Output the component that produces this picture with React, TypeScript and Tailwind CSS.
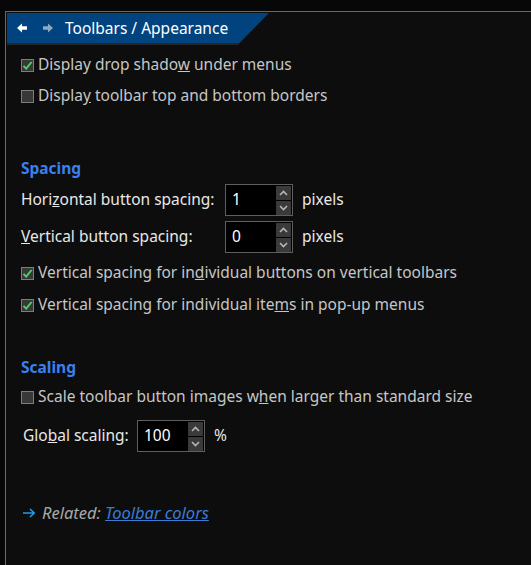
import React from 'react';

const font = { fontFamily: '"Noto Sans", "Open Sans", sans-serif' };

const CheckBox: React.FC<{ checked?: boolean }> = ({ checked }) => (
  <span className="w-[13px] h-[13px] border border-[#7c7c7c] bg-[#383838] flex items-center justify-center shrink-0">
    {checked && (
      <svg width="11" height="11" viewBox="0 0 11 11">
        <path d="M1.5 5.8 L4.2 8.6 L9.6 2" fill="none" stroke="#4fd36b" strokeWidth="1.9" />
      </svg>
    )}
  </span>
);

const CheckRow: React.FC<{ checked?: boolean; mt: string; children: React.ReactNode }> = ({ checked, mt, children }) => (
  <div className={`flex items-center gap-[4px] h-6 pl-[14px] ${mt}`}>
    <CheckBox checked={checked} />
    <span className="text-[#c6c6c6] text-[15.5px]">{children}</span>
  </div>
);

const Spin: React.FC<{ value: string }> = ({ value }) => (
  <div className="w-[68px] h-[32px] border border-[#5e5e5e] bg-black flex items-stretch">
    <span className="flex-1 flex items-center pl-[6px] text-white text-[15.5px]">{value}</span>
    <div className="flex flex-col justify-center gap-px pr-px">
      <span className="w-[15px] h-[14px] bg-[#3a3a3a] flex items-center justify-center">
        <svg width="9" height="6" viewBox="0 0 9 6"><path d="M1 5 L4.5 1.5 L8 5" fill="none" stroke="#b5b5b5" strokeWidth="1.6" /></svg>
      </span>
      <span className="w-[15px] h-[14px] bg-[#3a3a3a] flex items-center justify-center">
        <svg width="9" height="6" viewBox="0 0 9 6"><path d="M1 1 L4.5 4.5 L8 1" fill="none" stroke="#b5b5b5" strokeWidth="1.6" /></svg>
      </span>
    </div>
  </div>
);

const App: React.FC = () => {
  return (
    <div className="w-[531px] h-[565px] bg-[#070707] pt-[11px] pl-[5px] overflow-hidden" style={font}>
      <div className="h-[554px] border-l border-t border-[#6a6a6a] bg-[#0d0d0d] pt-px pl-px">
        {/* header */}
        <div className="w-[262px] h-[32px] bg-[#262626] [clip-path:polygon(0_0,262px_0,231px_100%,0_100%)]">
          <div className="h-[30px] bg-[#00437f] flex items-center [clip-path:polygon(0_0,262px_0,232px_100%,0_100%)]">
            <svg className="ml-[10px]" width="10" height="10" viewBox="0 0 10 10">
              <path d="M0 5 L5 0.5 L5 3.3 L10 3.3 L10 6.7 L5 6.7 L5 9.5 Z" fill="#ffffff" />
            </svg>
            <svg className="ml-[16px]" width="10" height="10" viewBox="0 0 10 10">
              <path d="M10 5 L5 0.5 L5 3.3 L0 3.3 L0 6.7 L5 6.7 L5 9.5 Z" fill="#8fa7bf" />
            </svg>
            <span className="ml-[12px] pt-[2px] text-white text-[15.5px] leading-none">Toolbars / Appearance</span>
          </div>
        </div>

        <CheckRow checked mt="mt-[8px]">
          Display drop shado<u>w</u> under menus
        </CheckRow>
        <CheckRow mt="mt-[7px]">
          Displa<u>y</u> toolbar top and bottom borders
        </CheckRow>

        <div className="mt-[49px] h-6 pl-[14px] flex items-center text-[15.5px] font-bold text-[#3b80f0]">Spacing</div>

        <div className="mt-[3px] h-[32px] pl-[14px] flex items-center">
          <span className="w-[204px] text-[#e8e8e8] text-[15.5px]">Hori<u>z</u>ontal button spacing:</span>
          <Spin value="1" />
          <span className="ml-[9px] text-[#e8e8e8] text-[15.5px]">pixels</span>
        </div>
        <div className="mt-[5px] h-[32px] pl-[14px] flex items-center">
          <span className="w-[204px] text-[#e8e8e8] text-[15.5px]"><u>V</u>ertical button spacing:</span>
          <Spin value="0" />
          <span className="ml-[9px] text-[#e8e8e8] text-[15.5px]">pixels</span>
        </div>

        <CheckRow checked mt="mt-[8px]">
          Vertical spacing for in<u>d</u>ividual buttons on vertical toolbars
        </CheckRow>
        <CheckRow checked mt="mt-[8px]">
          Vertical spacing for individual ite<u>m</u>s in pop-up menus
        </CheckRow>

        <div className="mt-[39px] h-6 pl-[14px] flex items-center text-[15.5px] font-bold text-[#3b80f0]">Scaling</div>

        <CheckRow mt="mt-[5px]">
          Scale toolbar button images w<u>h</u>en larger than standard size
        </CheckRow>

        <div className="mt-[11px] h-[32px] pl-[16px] flex items-center">
          <span className="w-[114px] text-[#e8e8e8] text-[15.5px]">Glo<u>b</u>al scaling:</span>
          <Spin value="100" />
          <span className="ml-[9px] text-[#e8e8e8] text-[15.5px]">%</span>
        </div>

        <div className="mt-[49px] h-6 pl-[16px] flex items-center gap-[6px] text-[16.5px] italic">
          <svg width="13" height="10" viewBox="0 0 13 10">
            <path d="M0 5 L11 5 M7 1 L11.2 5 L7 9" fill="none" stroke="#1e9be8" strokeWidth="1.6" />
          </svg>
          <span className="text-[#a8a8a8]">
            Related: <a className="text-[#3a7cd4] underline">Toolbar colors</a>
          </span>
        </div>
      </div>
    </div>
  );
};

export default App;
